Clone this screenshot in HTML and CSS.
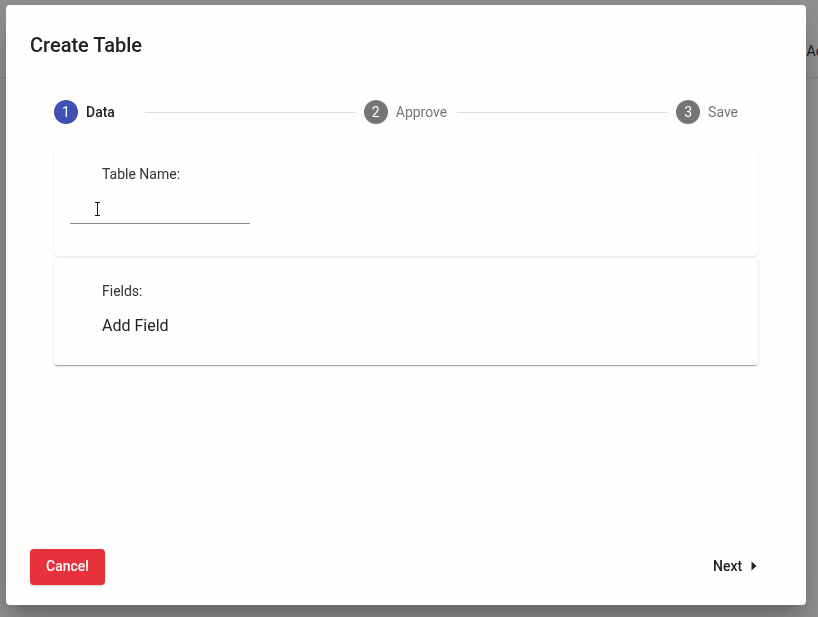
FILE: index.html
```html
<!DOCTYPE html>
<html>
<head>
<meta charset="utf-8">
<link rel="stylesheet" href="styles.css">
</head>
<body>
<div class="page">
  <div class="topbar"></div>
  <div class="header"><span class="hdr-text">Ac</span></div>
</div>
<div class="overlay">
  <div class="dialog">
    <h1 class="title">Create Table</h1>
    <div class="stepper">
      <div class="step active"><span class="num">1</span><span class="label">Data</span></div>
      <div class="line first"></div>
      <div class="step"><span class="num">2</span><span class="label">Approve</span></div>
      <div class="line"></div>
      <div class="step"><span class="num">3</span><span class="label">Save</span></div>
    </div>
    <div class="cards">
      <div class="card card-name">
        <div class="field-label">Table Name:</div>
        <div class="input">
          <svg class="ibeam" width="7" height="16" viewBox="0 0 7 16"><path d="M1 1.5h5M1 14.5h5M3.5 1.5v13" stroke="#fff" stroke-width="3" fill="none"/><path d="M1 1.5h5M1 14.5h5M3.5 1.5v13" stroke="#111" stroke-width="1" fill="none"/></svg>
        </div>
      </div>
      <div class="card card-fields">
        <div class="field-label">Fields:</div>
        <div class="add-field">Add Field</div>
      </div>
    </div>
    <div class="spacer"></div>
    <div class="actions">
      <button class="btn cancel">Cancel</button>
      <button class="btn next">Next <svg width="6" height="10" viewBox="0 0 6 10"><path d="M0.5 0.5L5.5 5L0.5 9.5Z" fill="#222"/></svg></button>
    </div>
  </div>
</div>
</body>
</html>
```
FILE: styles.css
```css
* { box-sizing: border-box; }
html, body { margin: 0; padding: 0; }
body {
  width: 818px;
  height: 617px;
  overflow: hidden;
  font-family: Roboto, "Liberation Sans", sans-serif;
  background: #fafafa;
}
.page { width: 818px; overflow: hidden; }
.topbar { height: 22px; background: #f4f4f4; }
.header {
  height: 56px;
  border-bottom: 1px solid #d8d8d8;
  background: #fbfbfb;
  display: flex;
  justify-content: flex-end;
  align-items: center;
  padding-top: 3px;
  overflow: hidden;
}
.hdr-text { font-size: 14px; color: #333; margin-right: -5px; white-space: nowrap; flex-shrink: 0; }
.overlay {
  position: fixed;
  inset: 0;
  background: rgba(0,0,0,0.4);
}
.dialog {
  position: absolute;
  left: 6px;
  top: 5px;
  width: 800px;
  height: 600px;
  background: #fffefd;
  border-radius: 4px;
  box-shadow: 0 11px 15px -7px rgba(0,0,0,.2), 0 24px 38px 3px rgba(0,0,0,.14), 0 9px 46px 8px rgba(0,0,0,.12);
  padding: 24px 24px 20px;
  display: flex;
  flex-direction: column;
}
.title {
  margin: 0;
  font-size: 20px;
  line-height: 32px;
  font-weight: 500;
  color: #212121;
}
.stepper {
  display: flex;
  align-items: center;
  padding: 0 44px 0 24px;
  margin-top: 39px;
  height: 24px;
}
.step { display: flex; align-items: center; }
.num {
  width: 24px;
  height: 24px;
  border-radius: 50%;
  background: #757575;
  color: #fff;
  font-size: 14px;
  display: flex;
  align-items: center;
  justify-content: center;
}
.step.active .num { background: #3f51b5; }
.label {
  margin-left: 8px;
  font-size: 14px;
  color: #757575;
}
.step.active .label { color: #212121; font-weight: 500; }
.line {
  flex: 1;
  height: 1px;
  background: #dcdcdc;
  margin: 0 9px 0 10px;
}
.line.first { margin-left: 30px; }
.cards {
  margin: 26px 24px 0;
  display: flex;
  flex-direction: column;
  gap: 2px;
}
.card {
  background: #fffefd;
  border-radius: 4px;
  box-shadow: 0 2px 1px -1px rgba(0,0,0,.2), 0 1px 1px 0 rgba(0,0,0,.14), 0 1px 3px 0 rgba(0,0,0,.12);
  padding: 16px;
}
.card-name {
  height: 106px;
  box-shadow: 0 0 1px 0 rgba(0,0,0,.14), 0 1px 2px 0 rgba(0,0,0,.08);
}
.card-fields { height: 107px; padding-top: 25px; }
.field-label {
  margin-left: 32px;
  font-size: 14px;
  line-height: 16px;
  color: #333;
}
.input {
  width: 180px;
  height: 33px;
  border-bottom: 1px solid #8a8a8a;
  margin-top: 9px;
  position: relative;
}
.ibeam { position: absolute; left: 24px; top: 10px; }
.add-field {
  margin-left: 32px;
  margin-top: 17px;
  font-size: 16px;
  line-height: 20px;
  color: #222;
}
.spacer { flex: 1; }
.actions {
  display: flex;
  justify-content: space-between;
  align-items: center;
}
.btn {
  font-family: Roboto, "Liberation Sans", sans-serif;
  font-size: 14px;
  font-weight: 500;
  height: 36px;
  border: none;
  border-radius: 4px;
  cursor: pointer;
  padding-top: 0;
  padding-bottom: 3px;
}
.cancel {
  background: #e5323b;
  color: #fff;
  width: 75px;
  padding-left: 0;
  padding-right: 0;
  box-shadow: 0 1px 2px rgba(0,0,0,.2);
}
.next {
  background: transparent;
  color: #222;
  width: 85px;
  padding-left: 16px;
  padding-right: 0;
  text-align: left;
  display: flex;
  align-items: center;
  gap: 9px;
}
```
